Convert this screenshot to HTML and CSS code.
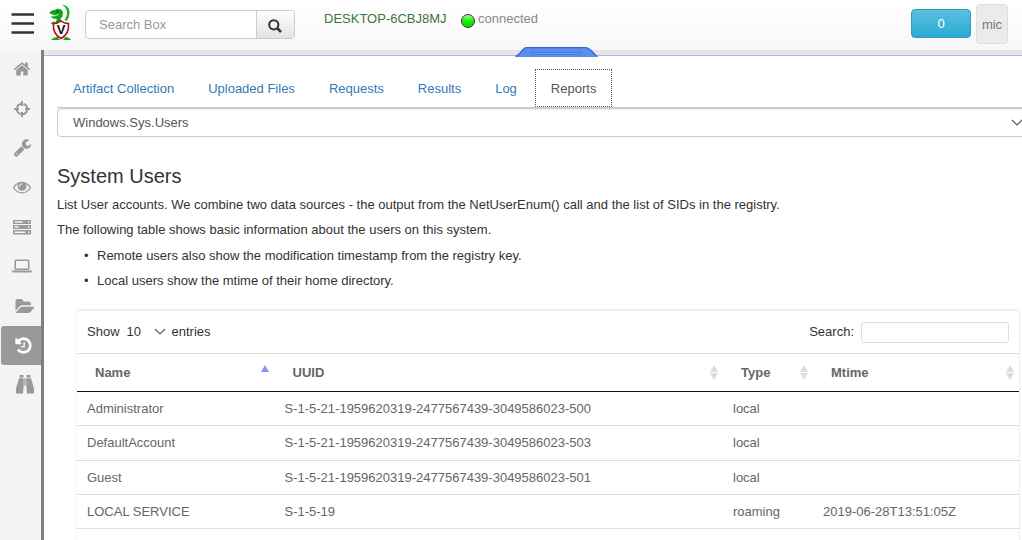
FILE: index.html
```
<!DOCTYPE html>
<html lang="en">
<head>
<meta charset="utf-8">
<title>System Users</title>
<link rel="stylesheet" href="styles.css">
</head>
<body>
<header class="topbar">
  <svg class="menu" width="24" height="24" viewBox="0 0 24 24"><path d="M.5 2.500h22.500M.5 11.500h22.500M.5 20.500h22.500" stroke="#333" stroke-width="2.400"/></svg>
  <svg class="logo" width="24" height="38" viewBox="0 0 24 38">
    <path d="M12.500 .5Q20 1 20.500 8Q20.800 13 17.500 17L15.500 16Q18.500 12 18 7.500Q17 2.500 12.500 .5Z" fill="#16b51c"/>
    <path d="M.5 9.500Q1 6.500 6 5.800Q8 4.300 11 5Q14 6 14 9.500Q14 13 11.500 14.500Q11.500 17 14 19L15 23H7Q6 18 8 15Q3.500 15 1.500 12.500L6.500 11.500Z" fill="#12a51b"/>
    <path d="M2 12Q6 12.500 9.500 10.500" fill="none" stroke="#e8ffe8" stroke-width=".8"/>
    <path d="M1.500 19.500L4.500 17.500L7 18.500L5 21Z" fill="#12a51b"/>
    <circle cx="8.500" cy="7.800" r="1" fill="#064d12"/>
    <path d="M2 36Q5 33 8 33L11 36ZM14 36L16.500 33Q20 33 22 36Z" fill="#12a51b"/>
    <path d="M4.500 19.500Q9 19.500 12 17Q15 19.500 19.500 19.500Q20.500 30 12 34.500Q3.500 30 4.500 19.500Z" fill="#fff" stroke="#b31217" stroke-width="1.600"/>
    <text class="logo-letter" x="12" y="30" text-anchor="middle">V</text>
  </svg>
  <div class="search">
    <span class="search-field">Search Box</span>
    <span class="search-button"><svg width="14" height="14" viewBox="0 0 14 14" fill="none" stroke="#333"><circle cx="5.800" cy="5.800" r="4.600" stroke-width="2"/><path d="M9 9l4 4" stroke-width="2.500"/></svg></span>
  </div>
  <div class="client">
    <span class="host">DESKTOP-6CBJ8MJ</span>
    <span class="status-dot"></span>
    <span class="status">connected</span>
  </div>
  <div class="account"><span class="count">0</span><span class="user">mic</span></div>
</header>
<div class="body">
  <nav class="sidebar">
    <a class="nav"><svg width="18" height="18" viewBox="0 0 1792 1792"><path d="M1472 992v480q0 26-19 45t-45 19h-384v-384h-256v384h-384q-26 0-45-19t-19-45v-480q0-1 .5-3t.5-3l575-474 575 474q1 2 1 6zm223-69l-62 74q-8 9-21 11h-3q-13 0-21-7l-692-577-692 577q-12 8-24 7-13-2-21-11l-62-74q-8-10-7-23.500t11-21.500l719-599q32-26 76-26t76 26l244 204v-195q0-14 9-23t23-9h192q14 0 23 9t9 23v408l219 182q10 8 11 21.500t-7 23.500z"/></svg></a>
    <a class="nav"><svg class="line" width="18" height="18" viewBox="0 0 18 18"><circle cx="9" cy="9" r="5.200" stroke-dasharray="6.200 1.970" stroke-dashoffset="-1"/><path d="M9 1v5M9 12v5M1 9h5M12 9h5"/></svg></a>
    <a class="nav"><svg width="19" height="19" viewBox="0 0 1792 1792"><path d="M448 1472q0-26-19-45t-45-19-45 19-19 45 19 45 45 19 45-19 19-45zm644-420l-682 682q-37 37-90 37-52 0-91-37l-106-108q-38-36-38-90 0-53 38-91l681-681q39 98 114.500 173.500t173.500 114.500zm634-435q0 39-23 106-47 134-164.500 217.500t-258.500 83.500q-185 0-316.500-131.500t-131.500-316.500 131.500-316.500 316.500-131.500q58 0 121.500 16.500t107.500 46.500q16 11 16 28t-16 28l-293 169v224l193 107q5-3 79-48.500t135.500-81 70.500-35.500q15 0 23.500 10t8.500 25z"/></svg></a>
    <a class="nav"><svg width="18" height="18" viewBox="0 0 1792 1792"><path d="M1664 960q-152-236-381-353 61 104 61 225 0 185-131.500 316.500t-316.500 131.500-316.500-131.500-131.500-316.500q0-121 61-225-229 117-381 353 133 205 333.500 326.500t434.500 121.500 434.500-121.500 333.500-326.500zm-720-384q0-20-14-34t-34-14q-125 0-214.500 89.500t-89.500 214.500q0 20 14 34t34 14 34-14 14-34q0-86 61-147t147-61q20 0 34-14t14-34zm848 384q0 34-20 69-140 230-376.500 368.500t-499.500 138.500-499.500-139-376.500-368q-20-35-20-69t20-69q140-229 376.500-368t499.500-139 499.500 139 376.500 368q20 35 20 69z"/></svg></a>
    <a class="nav"><svg width="18" height="16" viewBox="0 0 18 16"><path fill-rule="evenodd" d="M0 1h18v4H0ZM1.500 2.300v1.400h8V2.300ZM15 2.300v1.400h1.500V2.300ZM0 6h18v4H0ZM1.500 7.300v1.400h4V7.300ZM15 7.300v1.400h1.500V7.300ZM0 11h18v4.500H0ZM1.500 12.400v1.500h11v-1.500ZM15 12.400v1.500h1.500v-1.500Z"/></svg></a>
    <a class="nav"><svg width="20" height="14" viewBox="0 0 20 14"><path fill-rule="evenodd" d="M4 .5h12Q17.500 .5 17.500 2v7.500Q17.500 11 16 11H4Q2.500 11 2.500 9.500V2Q2.500 .5 4 .5ZM4 2v7.500h12V2ZM0 11.500h20v.8q0 1.200-2 1.200H2q-2 0-2-1.200Z"/></svg></a>
    <a class="nav shifted"><svg width="20" height="18" viewBox="0 0 1900 1792"><path d="M1879 1016q0 31-31 66l-336 396q-43 51-120.500 86.500t-143.500 35.500h-1088q-34 0-60.500-13t-26.500-43q0-31 31-66l336-396q43-51 120.500-86.500t143.500-35.500h1088q34 0 60.500 13t26.500 43zm-343-344v160h-832q-94 0-197 47.500t-164 119.500l-337 396-5 6q0-4-.5-12.500t-.5-12.500v-960q0-92 66-158t158-66h320q92 0 158 66t66 158v32h544q92 0 158 66t66 158z"/></svg></a>
    <a class="nav active"><svg width="19" height="19" viewBox="0 0 1792 1792"><path d="M1664 896q0 156-61 298t-164 245-245 164-298 61q-172 0-327-72.500t-264-204.500q-7-10-6.500-22.500t8.500-20.500l137-138q10-9 25-9 16 2 23 12 73 95 179 147t225 52q104 0 198.500-40.500t163.500-109.500 109.500-163.500 40.500-198.500-40.500-198.500-109.500-163.500-163.500-109.500-198.500-40.500q-98 0-188 35.500t-160 101.500l137 138q31 30 14 69-17 40-59 40h-448q-26 0-45-19t-19-45v-448q0-42 40-59 39-17 69 14l130 129q107-101 244.500-156.500t284.500-55.500q156 0 298 61t245 164 164 245 61 298zm-640-288v448q0 14-9 23t-23 9h-320q-14 0-23-9t-9-23v-64q0-14 9-23t23-9h224v-352q0-14 9-23t23-9h64q14 0 23 9t9 23z"/></svg></a>
    <a class="nav shifted"><svg width="18" height="19" viewBox="0 0 18 19"><path d="M3.500 0h4v2.500h-4ZM10.500 0h4v2.500h-4ZM3 3.300h4.700v7.200L7 18.500H0v-5ZM10.300 3.300H15l3 10.200v5h-7l-.7-8ZM8.300 3.300h1.400v7.200H8.300Z"/></svg></a>
  </nav>
  <main class="main">
    <div class="splitter"><svg class="handle" width="83" height="10" viewBox="0 0 83 10"><path d="M0 10Q2 9 5 5.500T11 .5H71Q74 .5 77 4T83 10Z" fill="#5b8fee"/><path d="M.5 9.500Q3 9 6 5T11 .7H71Q74 1 77 4.500T82.500 9.500" fill="none" stroke="#2f69dc" stroke-width="1.300"/><path d="M16 7.500V5.500H66V7.500Z" fill="#6fa0f5" stroke="#3774df" stroke-width=".8"/></svg></div>
    <div class="content">
      <div class="tabs">
        <a class="tab">Artifact Collection</a><a class="tab">Uploaded Files</a><a class="tab">Requests</a><a class="tab">Results</a><a class="tab">Log</a><a class="tab current">Reports</a>
      </div>
      <div class="select"><span>Windows.Sys.Users</span><svg width="12" height="8" viewBox="0 0 12 8"><path class="chevron" d="M1 1l5 5 5-5"/></svg></div>
      <h2>System Users</h2>
      <p>List User accounts. We combine two data sources - the output from the NetUserEnum() call and the list of SIDs in the registry.</p>
      <p>The following table shows basic information about the users on this system.</p>
      <ul>
        <li>Remote users also show the modification timestamp from the registry key.</li>
        <li>Local users show the mtime of their home directory.</li>
      </ul>
      <section class="panel">
        <div class="controls">
          <span class="length">Show<span class="number">10</span><svg width="12" height="8" viewBox="0 0 12 8"><path class="chevron" d="M1 1l5 5 5-5"/></svg>entries</span>
          <label class="filter">Search:<input type="text"></label>
        </div>
        <table>
          <colgroup><col class="c-name"><col class="c-uuid"><col class="c-type"><col></colgroup>
          <thead><tr>
            <th><div class="head">Name<span class="sort asc"></span></div></th>
            <th><div class="head">UUID<span class="sort"></span></div></th>
            <th><div class="head">Type<span class="sort"></span></div></th>
            <th><div class="head">Mtime<span class="sort"></span></div></th>
          </tr></thead>
          <tbody>
            <tr><td>Administrator</td><td>S-1-5-21-1959620319-2477567439-3049586023-500</td><td>local</td><td></td></tr>
            <tr><td>DefaultAccount</td><td>S-1-5-21-1959620319-2477567439-3049586023-503</td><td>local</td><td></td></tr>
            <tr><td>Guest</td><td>S-1-5-21-1959620319-2477567439-3049586023-501</td><td>local</td><td></td></tr>
            <tr><td>LOCAL SERVICE</td><td>S-1-5-19</td><td>roaming</td><td>2019-06-28T13:51:05Z</td></tr>
          </tbody>
        </table>
      </section>
    </div>
  </main>
</div>
</body>
</html>
```
FILE: styles.css
```
* { box-sizing: border-box; }
body { margin: 0; height: 540px; overflow: hidden; background: #fff; color: #333; font: 13px/20px "Liberation Sans", Arial, sans-serif; }
svg { display: block; flex: none; }
.topbar { display: flex; align-items: flex-start; height: 50px; padding: 0 14px 0 11px; background: linear-gradient(#fff, #f7f7f7); }
.menu { margin-top: 12px; }
.logo { margin: 4px 0 0 14px; }
.logo-letter { font: bold 13px "Liberation Sans", Arial, sans-serif; fill: #111; }
.search { display: flex; width: 210px; height: 29px; margin: 10px 0 0 12px; border: 1px solid #ccc; border-radius: 4px; overflow: hidden; background: #fff; }
.search-field { flex: 1; padding: 4px 13px; color: #999; }
.search-button { display: flex; align-items: center; justify-content: center; width: 38px; padding: 2px 1px 0 0; border-left: 1px solid #ccc; background: linear-gradient(#fff, #e2e2e2); }
.client { display: flex; margin: 9px 0 0 29px; color: #888; }
.host { color: #3c763d; width: 137px; }
.status-dot { width: 14px; height: 14px; margin: 5px 3px 0 0; border: 1px solid #333; border-radius: 50%; background: linear-gradient(#a5ff8c, #15ee08 50%, #08d800); }
.account { display: flex; gap: 5px; margin-left: auto; }
.count { width: 60px; height: 29px; margin-top: 9px; border: 1px solid #2b9dbd; border-radius: 4px; color: #fff; line-height: 27px; text-align: center; background: linear-gradient(#5bc0de, #2aabd2); }
.user { width: 32px; height: 40px; margin-top: 4px; border: 1px solid #ddd; border-radius: 4px; background: #ebebeb; color: #777; line-height: 39px; text-align: center; }
.body { display: flex; height: 490px; }
.sidebar { width: 44px; border-right: 3px solid #808080; background: #f4f4f4; }
.nav { display: flex; align-items: center; justify-content: center; height: 39.4px; padding: 0 0 1px 3px; fill: #999; }
.nav.shifted { padding-left: 8px; }
.nav.active { margin-left: 1px; padding: 0 0 0 4px; border-radius: 3px 0 0 3px; background: #999; fill: #fff; }
.line { fill: none; stroke: #999; stroke-width: 2; }
.main { flex: 1; min-width: 0; }
.splitter { position: relative; height: 6px; border-bottom: 1px solid #9dbbf2; background: linear-gradient(#e3e2e2, #f3e8e6); }
.handle { position: absolute; left: 471px; top: -3px; }
.content { padding-left: 13px; }
.tabs { display: flex; height: 52px; padding-top: 13px; border-bottom: 1px solid #ccc; }
.tab { height: 38px; margin-right: 2px; padding: 10px 16px; color: #337ab7; }
.tab.current { border: 1px dotted #555; padding: 9px 14.500px 9px 15px; color: #555; }
.select { display: flex; align-items: center; justify-content: space-between; width: 969px; height: 29px; padding: 1px 2px 0 15px; border: 1px solid #ccc; border-radius: 4px 0 0 4px; box-shadow: inset 0 1px 1px rgba(0, 0, 0, .075); color: #555; }
.chevron { fill: none; stroke: #555; stroke-width: 1.100; }
h2 { margin: 28px 0 8px; font-size: 20px; font-weight: 400; line-height: 22px; }
p { margin: 0 0 5px; }
ul { margin: 0; padding: 1px 0 0; list-style: none; }
li { margin-bottom: 5px; padding-left: 40px; }
li::before { content: "•"; display: inline-block; width: 13px; margin-left: -13px; }
.panel { width: 944px; height: 240px; margin: 18px 0 0 19px; border-top: 2px solid #eee; border-right: 1px solid #eee; border-left: 1px solid #f5f5f5; border-radius: 5px 5px 0 0; }
.controls { display: flex; align-items: center; justify-content: space-between; height: 42px; padding: 0 10px; }
.length { display: flex; align-items: center; }
.number { width: 27px; margin-left: 7px; }
.length svg { margin-right: 6px; }
.filter { display: flex; align-items: center; gap: 7px; }
input { width: 148px; height: 21px; border: 1px solid #ddd; border-radius: 3px; }
table { width: 942px; border-collapse: separate; border-spacing: 0; table-layout: fixed; color: #666; }
.c-name { width: 197.500px; }
.c-uuid { width: 448.500px; }
.c-type { width: 90px; }
th { height: 39px; padding: 0 5.500px 0 18px; border-top: 1px solid #ddd; border-bottom: 1px solid #111; text-align: left; }
.head { display: flex; justify-content: space-between; align-items: center; }
.sort { display: flex; flex-direction: column; gap: 1px; }
.sort::before, .sort::after { content: ""; border: 4.500px solid transparent; }
.sort::before { border-top: 0; border-bottom: 7px solid #ddd; }
.sort::after { border-bottom: 0; border-top: 7px solid #ddd; }
.asc::before { border-bottom-color: #8b93ff; }
.asc::after { border-top-color: transparent; }
td { height: 34.300px; padding: 0 10px; border-bottom: 1px solid #ddd; }
tr:nth-child(3) td { padding-top: 1px; }
```
